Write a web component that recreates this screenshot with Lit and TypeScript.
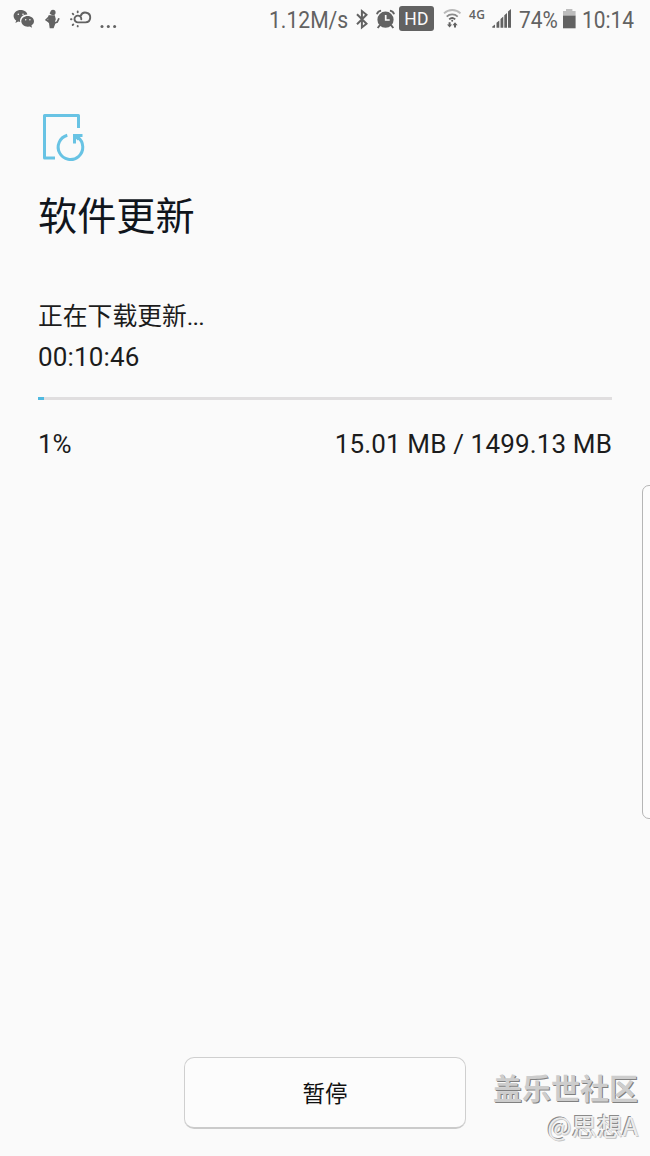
import { LitElement, html, css } from 'lit';
import { customElement, property } from 'lit/decorators.js';

@customElement('status-bar')
class StatusBar extends LitElement {
  static styles = css`
    :host { display: flex; height: 40px; position: relative; color: #626262; fill: #626262; font: 24px/40px Roboto, sans-serif; }
    .left, .right { display: flex; align-items: flex-start; }
    .left { width: 269px; flex: none; }
    svg { display: block; flex: none; }
    .t { flex: none; white-space: nowrap; }
    .t span { display: inline-block; transform: scaleX(0.87); transform-origin: 0 50%; }
    .speed { width: 84px; }
    .speed span { transform: scaleX(0.88); }
    .pct { width: 42px; }
    .clock { width: 60px; }
    .hd { width: 35px; height: 25px; margin: 6px 7px 0 3px; border-radius: 3px; background: #626262; color: #fafafa; font: 17.500px/26px Roboto, sans-serif; text-align: center; flex: none; letter-spacing: 0.300px; }
    .net { width: 22px; font: 600 12px/30px "Open Sans", sans-serif; letter-spacing: 0.400px; flex: none; }
  `;
  render() {
    return html`
      <div class="left">
        <svg width="120" height="40" viewBox="0 0 120 40">
          <path d="M20.600 10c-4 0-7 2.700-7 6 0 1.900 1 3.500 2.600 4.600l-.8 2.500 2.800-1.500 2 .4c-1-4.200 2.500-7.800 7.200-7.600C26.800 11.700 24 10 20.600 10z"/>
          <path d="M27.700 16c-3.600 0-6.400 2.400-6.400 5.300s2.800 5.400 6.400 5.400l2-.3 2.400 1.300-.7-2.200c1.600-1 2.600-2.400 2.600-4.200 0-2.900-2.800-5.300-6.300-5.300z"/>
          <g fill="#fafafa"><circle cx="18.300" cy="14.200" r=".8"/><circle cx="23" cy="14.200" r=".8"/><circle cx="25.700" cy="19.800" r=".7"/><circle cx="29.900" cy="19.800" r=".7"/></g>
          <circle cx="53" cy="12.400" r="2.600"/><circle cx="50.700" cy="13.300" r="1"/>
          <path d="M48.500 15.200h6.300l1 4-.8 2.300.4 2-1.800 4.700h-3.900l-.7-5-1-2.200z"/>
          <path d="M49.500 16.500l-3.300 3.400 3.400 2.300M54.500 23l2.700-1 1.500-3.200" fill="none" stroke="#626262" stroke-width="1.700" stroke-linecap="round"/>
          <g fill="none" stroke="#626262" stroke-width="1.900" stroke-linecap="round">
            <path d="M81.300 19.200a3.400 3.400 0 1 0-3.100 3.200h7.300a4.900 4.900 0 1 0-4.800-6.500"/>
            <path d="M71 19.300h.5M72.700 13.700l.6.600M77.700 11.500v.7M72.700 25l.6-.6M77.700 26v.4"/>
          </g>
          <circle cx="102" cy="26.500" r="1.500"/><circle cx="108.300" cy="26.500" r="1.500"/><circle cx="114.600" cy="26.500" r="1.500"/>
        </svg>
      </div>
      <div class="right">
        <div class="t speed"><span>1.12M/s</span></div>
        <svg width="43" height="40" viewBox="353 0 43 40">
          <path d="M357 14.200l9.500 9.500-4.600 3.800V11l4.600 3.800-9.500 9.500" fill="none" stroke="#626262" stroke-width="2"/>
          <circle cx="385.500" cy="19.700" r="8.100"/>
          <path d="M380 25l-2.300 3M391 25l2.300 3" stroke="#626262" stroke-width="2"/>
          <path d="M376.900 14.200a5 5 0 0 1 4.200-3.600M394.100 14.200a5 5 0 0 0-4.200-3.600" fill="none" stroke="#626262" stroke-width="1.800"/>
          <path d="M385.700 15v5h4" fill="none" stroke="#fafafa" stroke-width="1.700"/>
        </svg>
        <div class="hd">HD</div>
        <svg width="28" height="40" viewBox="441 0 28 40">
          <g fill="none" stroke-width="1.800"><path d="M444 13.300a12 12 0 0 1 16.500 0" stroke="#b9b9b9"/><path d="M446.700 16.600a8 8 0 0 1 11 0" stroke="#8a8a8a"/><path d="M449.200 19.300a4.500 4.500 0 0 1 6 0" stroke="#626262"/></g>
          <circle cx="452.200" cy="20.800" r="1"/>
          <path d="M448.600 22.300h2v2.300h1.500l-2.500 3-2.600-3h1.600zM454 27.600h2v-2.300h1.600l-2.600-3-2.500 3h1.500z"/>
        </svg>
        <div class="net">4G</div>
        <svg width="28" height="40" viewBox="491 0 28 40">
          <path d="M492.300 27.800v-1.400l2.700-2v3.400zM496.500 27.800v-5l2.800-2.400v7.400zM500.500 27.800v-8.700l2.800-2.600v11.300zM504.300 27.800v-12.500l2.700-2.400v14.900zM508 27.800v-16.300l3-2.500v18.800z"/>
        </svg>
        <div class="t pct"><span>74%</span></div>
        <svg width="21" height="40" viewBox="561 0 21 40">
          <path d="M563 11h3V9h6.400v2h3.200v5H563z" fill="#bdbdbd"/><path d="M563 15.700h12.600v12.600H563z"/>
        </svg>
        <div class="t clock"><span>10:14</span></div>
      </div>`;
  }
}

@customElement('progress-line')
class ProgressLine extends LitElement {
  @property({ type: Number }) value = 0;
  static styles = css`
    :host { display: block; height: 3px; background: #e0dedf; }
    .fill { height: 3px; background: #4fb9e0; }
  `;
  render() {
    return html`<div class="fill" style="width:${this.value}%"></div>`;
  }
}

@customElement('app-root')
class AppRoot extends LitElement {
  static styles = css`
    :host { display: flex; flex-direction: column; position: relative; width: 650px; height: 1156px; overflow: hidden; background: #fafafa; color: #1c1c1c; font-family: Roboto, "Noto Sans CJK SC", sans-serif; }
    main { padding: 72px 38px 0; flex: 1; }
    .icon { display: block; width: 50px; height: 52px; }
    h1 { margin: 20px 0 0; font: 400 39.200px/58px "Noto Sans CJK SC", sans-serif; color: #10151c; }
    .state { margin-top: 56px; font: 24.800px/38px Roboto, "Noto Sans CJK SC", sans-serif; }
    .dots { letter-spacing: -0.800px; }
    .time { font-size: 26px; line-height: 40px; margin-top: 1px; letter-spacing: 0.150px; }
    progress-line { margin-top: 20px; }
    .row { display: flex; justify-content: space-between; font-size: 26px; line-height: 40px; margin-top: 24px; }
    .size { letter-spacing: 0.150px; }
    button { display: block; box-sizing: border-box; width: 282px; height: 72px; margin: 0 0 27px 184px; padding: 0; border: 1px solid #cfcfcf; border-bottom: 2px solid #cbcbcb; border-radius: 10px; background: #fcfcfc; color: #111; font: 22.500px/66px "Noto Sans CJK SC", sans-serif; }
    button span { display: block; margin-top: -2px; }
    .edge { position: absolute; left: 642px; top: 485px; width: 20px; height: 332px; border: 1px solid #b5b5b5; border-radius: 7px; background: #fcfcfc; }
    .mark { position: absolute; right: 12px; top: 1065px; text-align: right; white-space: nowrap; font-family: "Noto Sans CJK SC", sans-serif; }
    .brand { font-weight: 700; font-size: 29px; line-height: 44px; color: #cdcdcd; text-shadow: 1px 1px 0 #808080; }
    .user { font-size: 25.500px; line-height: 32px; color: #ececec; text-shadow: -1px -1px 0 #8a8a8a, 1px 1px 0 #c8c8c8; }
  `;
  render() {
    return html`
      <status-bar></status-bar>
      <main>
        <svg class="icon" viewBox="38 112 50 52" fill="none" stroke="#68c3e4" stroke-width="3">
          <path d="M78.500 128v-12.500h-34v42.500h10.500" stroke-linejoin="round"/>
          <path d="M67.300 135.300a12.300 12.300 0 1 0 10.500 2"/>
          <path d="M82.500 135.400h-8v8M75.300 136l3.500 3.500"/>
        </svg>
        <h1>软件更新</h1>
        <div class="state">正在下载更新<span class="dots">...</span></div>
        <div class="time">00:10:46</div>
        <progress-line .value=${1}></progress-line>
        <div class="row"><span>1%</span><span class="size">15.01 MB / 1499.13 MB</span></div>
      </main>
      <button><span>暂停</span></button>
      <div class="edge"></div>
      <div class="mark"><div class="brand">盖乐世社区</div><div class="user">@思想A</div></div>`;
  }
}
